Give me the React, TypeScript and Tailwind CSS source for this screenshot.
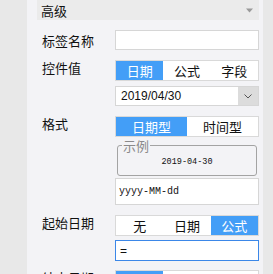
import React from "react";

const cjk = { fontFamily: '"Noto Sans CJK SC", "Noto Sans", sans-serif' };

function Seg({ items, active, cols }: { items: string[]; active: number; cols: string }) {
  return (
    <div className={`grid ${cols} h-[21px] shrink-0 border border-[#d9d9d9] bg-white`}>
      {items.map((t, i) => (
        <div
          key={t}
          className={`flex items-center justify-center text-[13px] leading-[13px] ${
            i === active ? "bg-[#439ef7] text-white" : "text-[#111]"
          }`}
        >
          {t}
        </div>
      ))}
    </div>
  );
}

function Label({ children, center }: { children: React.ReactNode; center?: boolean }) {
  return (
    <div className={`w-[73px] shrink-0 text-[13px] leading-[13px] text-[#111] ${center ? "" : "pt-[1px]"}`}>
      {children}
    </div>
  );
}

export default function App() {
  return (
    <div className="w-[273px] h-[274px] overflow-hidden flex bg-[#e8e8e8]" style={cjk}>
      <div className="w-[27px] shrink-0" />
      <div className="w-[236px] shrink-0 bg-[#f3f3f6] flex flex-col">
        <div className="shrink-0 ml-[10px] mr-[4px] h-[20px] bg-[#ebebeb] flex items-center justify-between pl-[4px] pr-[6px]">
          <span className="text-[13px] leading-[13px] text-[#111]">高级</span>
          <svg width="7" height="5" viewBox="0 0 7 5">
            <path d="M0 0.5 H7 L3.5 4.5 Z" fill="#9a9a9a" />
          </svg>
        </div>
        <div className="shrink-0 pl-[15px] pr-[4px] flex flex-col">
          <div className="shrink-0 flex items-center mt-[10px]">
            <Label center>标签名称</Label>
            <div className="w-[144px] h-[20px] border border-[#d6d6d6] bg-white" />
          </div>

          <div className="shrink-0 flex items-start mt-[10px]">
            <Label>控件值</Label>
            <div className="w-[144px] flex flex-col">
              <Seg items={["日期", "公式", "字段"]} active={0} cols="grid-cols-3" />
              <div className="shrink-0 mt-[5px] h-[20px] border border-[#d6d6d6] bg-white flex">
                <div
                  className="flex-1 flex items-center pl-[5px] text-[12px] text-[#111]"
                  style={{ fontFamily: '"Liberation Sans", Arial, sans-serif' }}
                >
                  2019/04/30
                </div>
                <div className="w-[20px] bg-[#dcdcdc] flex items-center justify-center">
                  <svg width="8" height="5" viewBox="0 0 8 5">
                    <path d="M0.5 0.5 L4 4 L7.5 0.5" fill="none" stroke="#555" strokeWidth="1" />
                  </svg>
                </div>
              </div>
            </div>
          </div>

          <div className="shrink-0 flex items-start mt-[10px]">
            <Label>格式</Label>
            <div className="w-[144px] flex flex-col">
              <Seg items={["日期型", "时间型"]} active={0} cols="grid-cols-2" />
              <div className="relative shrink-0 mx-[2px] mt-[8px] h-[31px] border border-[#a3a3a3] rounded-[3px] flex items-center justify-center pt-[2px]">
                <span className="absolute left-[4px] -top-[7px] px-[1px] bg-[#f3f3f6] text-[13px] leading-[13px] text-[#8a8a8a]">
                  示例
                </span>
                <span
                  className="text-[8.5px] leading-[10px] text-[#111]"
                  style={{ fontFamily: '"Liberation Mono", "Courier New", monospace' }}
                >
                  2019-04-30
                </span>
              </div>
              <div
                className="shrink-0 mt-[2px] h-[27px] border border-[#d6d6d6] bg-white flex items-center pl-[3px] text-[10px] text-[#111]"
                style={{ fontFamily: '"Liberation Mono", "Courier New", monospace' }}
              >
                yyyy-MM-dd
              </div>
            </div>
          </div>

          <div className="shrink-0 flex items-start mt-[10px]">
            <Label>起始日期</Label>
            <div className="w-[144px] flex flex-col">
              <Seg items={["无", "日期", "公式"]} active={2} cols="grid-cols-3" />
              <div
                className="shrink-0 mt-[4px] h-[21px] border border-[#3b87e8] bg-white flex items-center pl-[4px] text-[12px] text-[#111]"
                style={{ fontFamily: '"Liberation Sans", Arial, sans-serif' }}
              >
                =
              </div>
            </div>
          </div>

          <div className="shrink-0 flex items-start mt-[9px]">
            <Label>结束日期</Label>
            <div className="w-[144px] flex flex-col">
              <Seg items={["日期", "公式", "字段"]} active={0} cols="grid-cols-3" />
            </div>
          </div>
        </div>
      </div>
      <div className="flex-1" />
    </div>
  );
}
